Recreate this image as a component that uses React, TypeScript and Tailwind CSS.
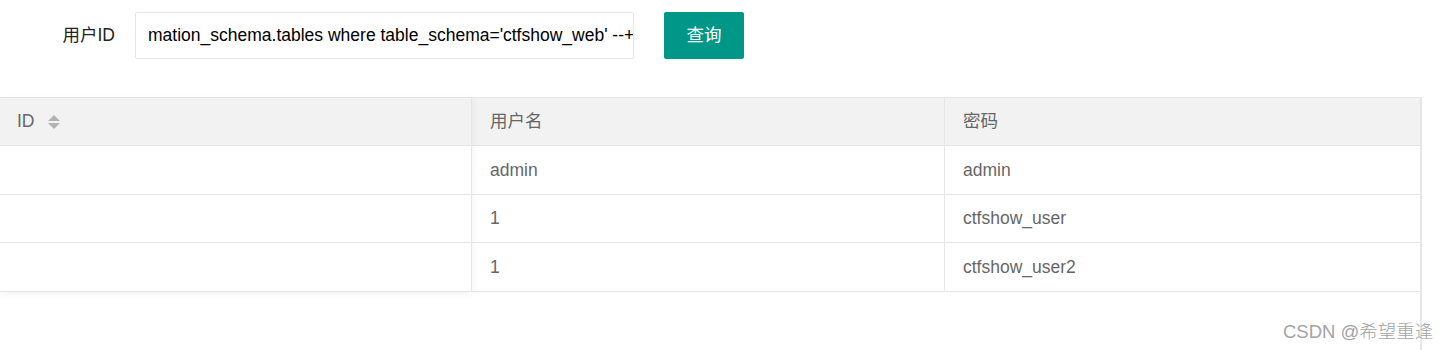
import { ReactNode } from 'react';

const FONT = "font-['Liberation_Sans','Noto_Sans_CJK_SC',sans-serif]";

interface Row {
  id: string;
  username: string;
  password: string;
}

const rows: Row[] = [
  { id: '', username: 'admin', password: 'admin' },
  { id: '', username: '1', password: 'ctfshow_user' },
  { id: '', username: '1', password: 'ctfshow_user2' },
];

// alternating heights so the lines land on the same pixels as the reference
const rowHeights = ['h-[49px]', 'h-[48px]', 'h-[49px]'];

function SortIcon() {
  return (
    <span className="ml-[13px] inline-flex flex-col items-center gap-[2px]">
      <span className="h-0 w-0 border-x-[6px] border-b-[6px] border-x-transparent border-b-[#b2b2b2]" />
      <span className="h-0 w-0 border-x-[6px] border-t-[6px] border-x-transparent border-t-[#b2b2b2]" />
    </span>
  );
}

function Cell({ children, className = '' }: { children?: ReactNode; className?: string }) {
  return (
    <div className={`flex items-center border-b border-[#e6e6e6] text-[17.5px] text-[#666] ${className}`}>
      {children}
    </div>
  );
}

export default function App() {
  return (
    <div className={`relative h-[350px] w-[1449px] overflow-hidden bg-white ${FONT}`}>
      {/* Search form */}
      <div className="flex items-center pt-[12px]">
        <label className="w-[135px] pr-[20px] text-right text-[17.5px] text-[#222]">用户ID</label>
        <div className="flex h-[47px] w-[499px] items-center overflow-hidden whitespace-nowrap rounded-[2px] border border-[#e6e6e6] bg-white pl-[12px] text-[17.5px] text-black">
          mation_schema.tables where table_schema='ctfshow_web' --+
        </div>
        <button className="ml-[30px] h-[47px] w-[80px] rounded-[2px] bg-[#009688] text-[17.5px] text-white">
          查询
        </button>
      </div>

      {/* Table */}
      <div className="mt-[38px] flex h-[253px] w-[1422px] flex-col border-r-2 border-[#e6e6e6]">
        <div className="flex w-[1420px] border-t border-[#e6e6e6]">
          {/* fixed left column */}
          <div className="relative z-10 flex w-[472px] flex-col border-r border-[#e6e6e6] bg-white shadow-[1px_2px_8px_rgba(0,0,0,0.05)]">
            <Cell className="h-[48px] bg-[#f2f2f2] pl-[17px]">
              ID
              <SortIcon />
            </Cell>
            {rows.map((r, i) => (
              <Cell key={i} className={`${rowHeights[i]} pl-[17px]`}>
                {r.id}
              </Cell>
            ))}
          </div>

          {/* remaining columns */}
          <div className="grid flex-1 grid-cols-[473px_1fr]">
            <Cell className="h-[48px] border-r bg-[#f2f2f2] pl-[18px]">用户名</Cell>
            <Cell className="h-[48px] bg-[#f2f2f2] pl-[18px]">密码</Cell>
            {rows.map((r, i) => [
              <Cell key={`u${i}`} className={`${rowHeights[i]} border-r pl-[18px]`}>
                {r.username}
              </Cell>,
              <Cell key={`p${i}`} className={`${rowHeights[i]} pl-[18px]`}>
                {r.password}
              </Cell>,
            ])}
          </div>
        </div>
      </div>

      {/* Watermark */}
      <div className="absolute left-[1283px] top-[318px] whitespace-nowrap text-[18.5px] font-light text-[#a3a3a3]">
        CSDN @希望重逢
      </div>
    </div>
  );
}
